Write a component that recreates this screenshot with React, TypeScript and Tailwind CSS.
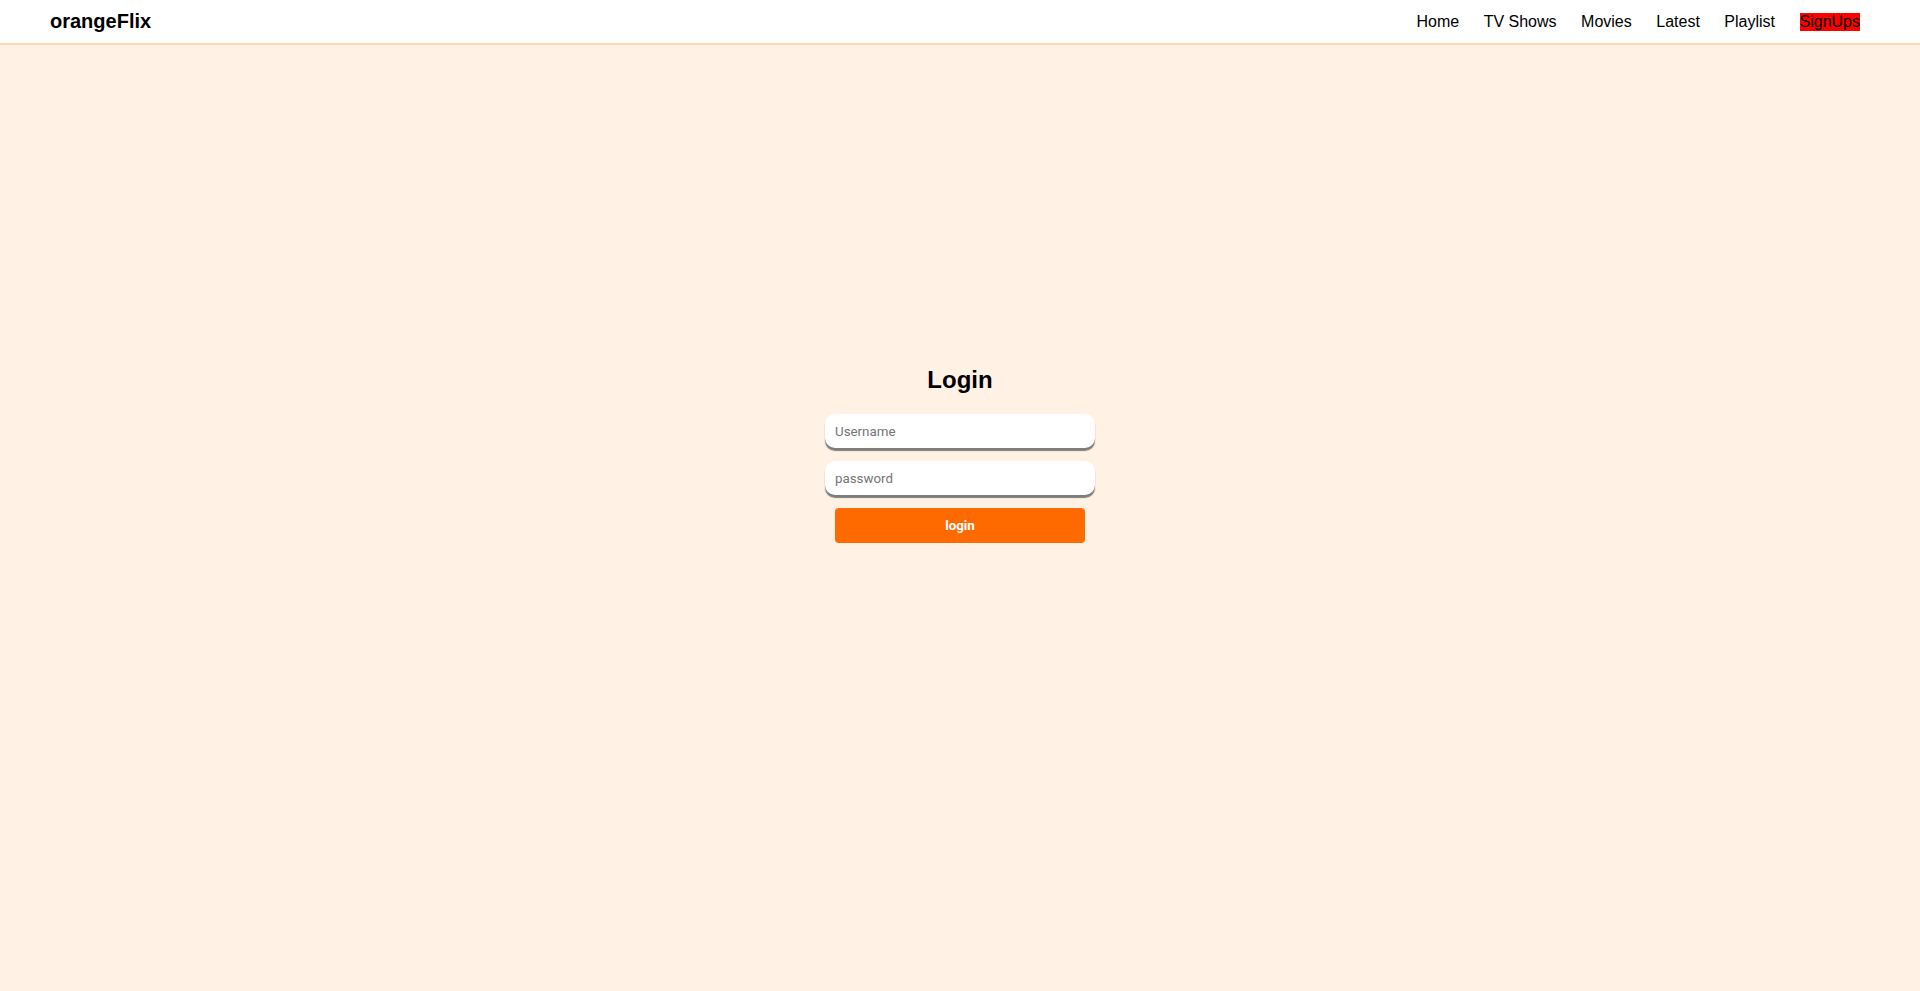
import React from "react";

export default function App() {
  return (
    <div className="min-h-[991px] bg-[#fff2e4] font-['Liberation_Sans',Arial,sans-serif] text-black">
      <header className="flex h-[45px] items-center justify-between border-b-2 border-[#ffd7b0] bg-white pl-[50px] pr-[60px]">
        <div className="text-[20px] font-bold leading-[normal]">orangeFlix</div>
        <nav className="flex items-center gap-[24.5px] text-[16px] leading-[normal]">
          <a>Home</a>
          <a>TV Shows</a>
          <a>Movies</a>
          <a>Latest</a>
          <a>Playlist</a>
          <a className="bg-[#ff0000]">SignUps</a>
        </nav>
      </header>
      <main className="flex flex-col items-center pt-[321px]">
        <h2 className="text-[24px] font-bold leading-[28px]">Login</h2>
        <div className="mt-[20px] flex flex-col items-center font-['Roboto',sans-serif]">
          <input
            placeholder="Username"
            className="h-[34px] w-[270px] rounded-[10px] bg-white px-[10px] text-[13.33px] shadow-[0_3px_1px_#7d7d7d] outline-none placeholder:text-[#757575]"
          />
          <input
            placeholder="password"
            type="password"
            className="mt-[13px] h-[34px] w-[270px] rounded-[10px] bg-white px-[10px] text-[13.33px] shadow-[0_3px_1px_#7d7d7d] outline-none placeholder:text-[#757575]"
          />
          <button className="mt-[13px] h-[35px] w-[250px] rounded-[4px] bg-[#ff6a00] text-[13.33px] font-bold text-white">
            login
          </button>
        </div>
      </main>
    </div>
  );
}
